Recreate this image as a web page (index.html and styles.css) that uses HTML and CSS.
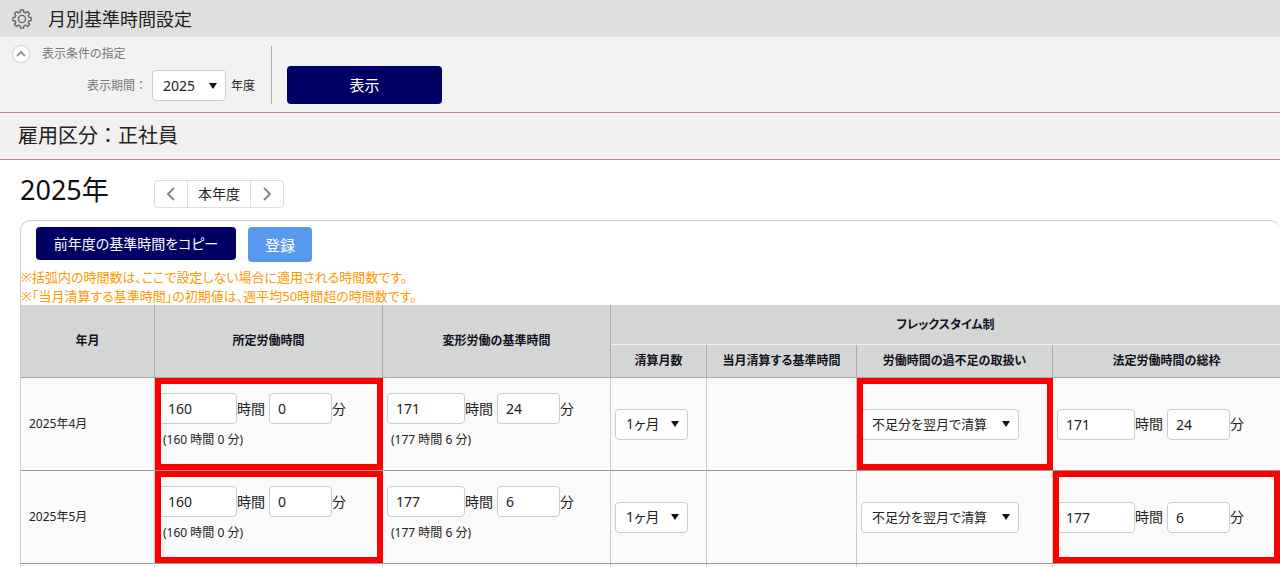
FILE: index.html
```html
<!DOCTYPE html>
<html lang="ja">
<head>
  <meta charset="UTF-8">
  <meta name="viewport" content="width=device-width, initial-scale=1.0">
  <title>月別基準時間設定</title>
  <link rel="stylesheet" href="styles.css">
</head>
<body>
  <header class="page-header">
    <svg class="gear" viewBox="0 0 20 20" width="20" height="20" fill="none" stroke="#666" stroke-width="1.4" stroke-linejoin="round">
      <path d="M8.5 1h3l.5 2.300 1.500.6 2-1.300 2 2-1.300 2 .6 1.500 2.300.4v3l-2.300.5-.6 1.500 1.300 2-2 2-2-1.300-1.500.6-.5 2.300h-3l-.5-2.300-1.500-.6-2 1.300-2-2 1.300-2-.6-1.500-2.300-.5v-3l2.300-.4.6-1.500-1.300-2 2-2 2 1.300 1.500-.6z"/>
      <circle cx="10" cy="10" r="3.600"/>
    </svg>
    <h1>月別基準時間設定</h1>
  </header>

  <!-- Display conditions -->
  <form class="filter">
    <div class="conditions">
      <div class="filter-title">
        <button type="button" class="toggle" aria-label="閉じる">
          <svg viewBox="0 0 16 16" width="16" height="16" fill="none" stroke="#999" stroke-width="2"><path d="M4 10l4-4 4 4"/></svg>
        </button>
        <span>表示条件の指定</span>
      </div>
      <div class="period">
        <label for="year">表示期間：</label>
        <select id="year"><option>2025</option></select>
        <span>年度</span>
      </div>
    </div>
    <button type="button" class="btn show">表示</button>
  </form>

  <h2 class="section-title">雇用区分：正社員</h2>

  <main>
    <div class="year-bar">
      <h3>2025年</h3>
      <div class="pager">
        <button type="button" aria-label="前年度"><svg viewBox="0 0 12 14" width="12" height="14" fill="none" stroke="#888" stroke-width="2"><path d="M9 1L3 7l6 6"/></svg></button>
        <button type="button" class="current">本年度</button>
        <button type="button" aria-label="翌年度"><svg viewBox="0 0 12 14" width="12" height="14" fill="none" stroke="#888" stroke-width="2"><path d="M3 1l6 6-6 6"/></svg></button>
      </div>
    </div>

    <div class="panel">
      <div class="actions">
        <button type="button" class="btn copy">前年度の基準時間をコピー</button>
        <button type="button" class="btn save">登録</button>
      </div>
      <p class="notice">※括弧内の時間数は、ここで設定しない場合に適用される時間数です。<br>※「当月清算する基準時間」の初期値は、週平均50時間超の時間数です。</p>

      <table>
        <colgroup>
          <col class="col-month">
          <col class="col-time">
          <col class="col-time">
          <col class="col-count">
          <col class="col-base">
          <col class="col-over">
          <col>
        </colgroup>
        <thead>
          <tr class="head-top">
            <th rowspan="2">年月</th>
            <th rowspan="2">所定労働時間</th>
            <th rowspan="2">変形労働の基準時間</th>
            <th colspan="4" class="flex-head">フレックスタイム制</th>
          </tr>
          <tr class="head-sub">
            <th>清算月数</th>
            <th>当月清算する基準時間</th>
            <th>労働時間の過不足の取扱い</th>
            <th>法定労働時間の総枠</th>
          </tr>
        </thead>
        <tbody>
          <tr>
            <td class="month">2025年4月</td>
            <td class="marked">
              <div class="time">
                <input type="text" class="hours" id="h1" value="160"><label for="h1">時間</label>
                <input type="text" class="minutes" id="m1" value="0"><label for="m1">分</label>
              </div>
              <div class="default">(160 時間 0 分)</div>
            </td>
            <td>
              <div class="time">
                <input type="text" class="hours" id="h2" value="171"><label for="h2">時間</label>
                <input type="text" class="minutes" id="m2" value="24"><label for="m2">分</label>
              </div>
              <div class="default">(177 時間 6 分)</div>
            </td>
            <td><select class="count" aria-label="清算月数"><option>1ヶ月</option></select></td>
            <td></td>
            <td class="marked"><select class="over" aria-label="労働時間の過不足の取扱い"><option>不足分を翌月で清算</option></select></td>
            <td>
              <div class="time">
                <input type="text" class="hours" id="h3" value="171"><label for="h3">時間</label>
                <input type="text" class="minutes" id="m3" value="24"><label for="m3">分</label>
              </div>
            </td>
          </tr>
          <tr>
            <td class="month">2025年5月</td>
            <td class="marked">
              <div class="time">
                <input type="text" class="hours" id="h4" value="160"><label for="h4">時間</label>
                <input type="text" class="minutes" id="m4" value="0"><label for="m4">分</label>
              </div>
              <div class="default">(160 時間 0 分)</div>
            </td>
            <td>
              <div class="time">
                <input type="text" class="hours" id="h5" value="177"><label for="h5">時間</label>
                <input type="text" class="minutes" id="m5" value="6"><label for="m5">分</label>
              </div>
              <div class="default">(177 時間 6 分)</div>
            </td>
            <td><select class="count" aria-label="清算月数"><option>1ヶ月</option></select></td>
            <td></td>
            <td><select class="over" aria-label="労働時間の過不足の取扱い"><option>不足分を翌月で清算</option></select></td>
            <td class="marked">
              <div class="time">
                <input type="text" class="hours" id="h6" value="177"><label for="h6">時間</label>
                <input type="text" class="minutes" id="m6" value="6"><label for="m6">分</label>
              </div>
            </td>
          </tr>
          <tr class="rest">
            <td></td><td></td><td></td><td></td><td></td><td></td><td></td>
          </tr>
        </tbody>
      </table>
    </div>
  </main>
</body>
</html>
```
FILE: styles.css
```css
* {
  box-sizing: border-box;
}

body {
  margin: 0;
  background: #fff;
  color: #222;
  font-family: "Noto Sans", "Noto Sans CJK JP", sans-serif;
  font-size: 14px;
  line-height: 20px;
  font-feature-settings: "palt";
}

h1, h2, h3, p {
  margin: 0;
  font-weight: normal;
}

button, input, select {
  font: inherit;
  font-feature-settings: inherit;
  color: inherit;
}

button {
  cursor: pointer;
}

.page-header {
  display: flex;
  align-items: center;
  gap: 16px;
  height: 37px;
  padding: 0 12px;
  background: #dfdfde;
}

.page-header h1 {
  font-size: 18px;
  line-height: 24px;
}

/* Display conditions */
.filter {
  display: flex;
  gap: 15px;
  height: 76px;
  padding: 9px 12px 8px;
  background: #f2f2f2;
  border-bottom: 1px solid #d87a9c;
}

.conditions {
  width: 260px;
  height: 58px;
  border-right: 1px solid #aaa;
}

.filter-title {
  display: flex;
  align-items: center;
  gap: 12px;
  height: 16px;
  font-size: 12px;
  color: #777;
}

.toggle {
  display: flex;
  width: 18px;
  height: 18px;
  padding: 0;
  border: 1px solid #ccc;
  border-radius: 50%;
  background: #fff;
}

.period {
  display: flex;
  align-items: center;
  justify-content: flex-end;
  gap: 5px;
  padding: 8px 16px 0 0;
  font-size: 12px;
}

.period label {
  color: #777;
  font-feature-settings: normal;
}

select {
  height: 31px;
  padding: 0 10px;
  border: 1px solid #ccc;
  border-radius: 4px;
  font-size: 14px;
  appearance: none;
  background: #fff url("data:image/svg+xml,%3Csvg xmlns='http://www.w3.org/2000/svg' width='8' height='6'%3E%3Cpath d='M0 0h8L4 6z' fill='%23111'/%3E%3C/svg%3E") no-repeat right 8px center;
}

#year {
  width: 74px;
}

.btn {
  border: 0;
  border-radius: 4px;
  background: #000064;
  color: #fff;
}

.show {
  align-self: flex-end;
  width: 155px;
  height: 38px;
  font-size: 15px;
}

.section-title {
  height: 47px;
  padding: 0 18px;
  background: #f1f0ef;
  border-bottom: 1px solid #d87a9c;
  font-size: 20px;
  line-height: 46px;
  font-feature-settings: normal;
}

main {
  padding-left: 20px;
}

.year-bar {
  display: flex;
  align-items: center;
  height: 60px;
}

.year-bar h3 {
  width: 134px;
  font-size: 27px;
  line-height: 36px;
  color: #111;
}

.pager {
  display: flex;
  height: 28px;
  margin-top: 8px;
  border: 1px solid #ddd;
  border-radius: 4px;
}

.pager button {
  display: flex;
  align-items: center;
  justify-content: center;
  width: 32px;
  padding: 0;
  border: 0;
  background: none;
}

.pager .current {
  width: 64px;
  border: solid #ddd;
  border-width: 0 1px;
}

.panel {
  border: solid #ccc;
  border-width: 1px 0 0 1px;
  border-radius: 10px 10px 0 0;
}

.actions {
  display: flex;
  gap: 12px;
  padding: 6px 15px;
}

.copy {
  width: 200px;
  height: 33px;
  font-size: 14px;
}

.save {
  width: 64px;
  height: 35px;
  background: #5899f0;
  font-size: 15px;
}

.notice {
  height: 37px;
  color: #f90;
  font-size: 13px;
  line-height: 19px;
}

table {
  width: 100%;
  table-layout: fixed;
  border-collapse: separate;
  border-spacing: 0;
}

.col-month {
  width: 134px;
}

.col-time {
  width: 228px;
}

.col-count {
  width: 96px;
}

.col-base {
  width: 150px;
}

.col-over {
  width: 196px;
}

th {
  padding: 0;
  background: #d4d6d5;
  border: solid #aaa;
  border-width: 0 1px 1px 0;
  color: #112;
  font-size: 12px;
}

.head-top {
  height: 40px;
}

.head-top .flex-head {
  border-bottom-color: #f0f0f0;
}

.head-sub {
  height: 33px;
}

td {
  position: relative;
  height: 93px;
  padding: 0 4px;
  background: #fafafa;
  border: solid #ccc;
  border-width: 0 1px 1px 0;
  border-bottom-color: #999;
  vertical-align: middle;
}

.flex-head, .head-sub th:last-child, td:last-child {
  border-right: 0;
}

.month {
  padding-left: 8px;
  font-size: 12px;
}

/* Red frame round the cells to fill in */
.marked::after {
  content: "";
  position: absolute;
  inset: 0 -1px 0 0;
  border: 6px solid #f00;
  pointer-events: none;
}

.marked:last-child::after {
  right: 0;
}

.time {
  display: flex;
  align-items: center;
}

.time input {
  height: 31px;
  padding: 0 8px;
  border: 1px solid #ccc;
  border-radius: 4px;
  background: #fff;
}

.time .hours {
  width: 78px;
}

.time .minutes {
  width: 63px;
  margin-left: 4px;
}

.default {
  padding-left: 4px;
  font-size: 12px;
  line-height: 31px;
}

.count {
  width: 73px;
}

.over {
  width: 158px;
  font-size: 13px;
}

.rest td {
  height: 3px;
  border-bottom: 0;
}
```
